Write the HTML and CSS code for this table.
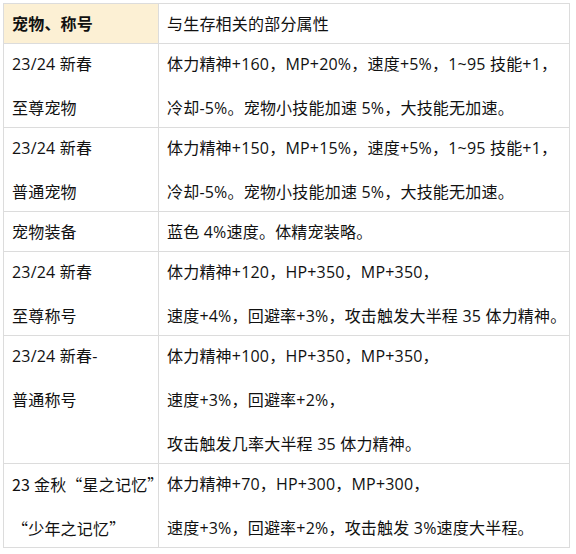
FILE: index.html
```html
<!DOCTYPE html>
<html lang="zh-CN">
<head>
<meta charset="utf-8">
<link rel="stylesheet" href="styles.css">
</head>
<body>
<div class="wrap">
<table class="attr-table">
  <colgroup><col class="c1"><col class="c2"></colgroup>
  <tr class="head">
    <th class="h-pet"><p>宠物、称号</p></th>
    <td><p>与生存相关的部分属性</p></td>
  </tr>
  <tr>
    <td><p>23/24 新春</p><p>至尊宠物</p></td>
    <td><p>体力精神+160，MP+20%，速度+5%，1~95 技能+1，</p><p>冷却-5%。宠物小技能加速 5%，大技能无加速。</p></td>
  </tr>
  <tr>
    <td><p>23/24 新春</p><p>普通宠物</p></td>
    <td><p>体力精神+150，MP+15%，速度+5%，1~95 技能+1，</p><p>冷却-5%。宠物小技能加速 5%，大技能无加速。</p></td>
  </tr>
  <tr>
    <td><p>宠物装备</p></td>
    <td><p>蓝色 4%速度。体精宠装略。</p></td>
  </tr>
  <tr>
    <td><p>23/24 新春</p><p>至尊称号</p></td>
    <td><p>体力精神+120，HP+350，MP+350，</p><p>速度+4%，回避率+3%，攻击触发大半程 35 体力精神。</p></td>
  </tr>
  <tr>
    <td><p>23/24 新春-</p><p>普通称号</p></td>
    <td><p>体力精神+100，HP+350，MP+350，</p><p>速度+3%，回避率+2%，</p><p>攻击触发几率大半程 35 体力精神。</p></td>
  </tr>
  <tr>
    <td class="cjk"><p>23 金秋“星之记忆”</p><p>“少年之记忆”</p></td>
    <td><p>体力精神+70，HP+300，MP+300，</p><p>速度+3%，回避率+2%，攻击触发 3%速度大半程。</p></td>
  </tr>
</table>
</div>
</body>
</html>
```

FILE: styles.css
```css
html, body {
  margin: 0;
  padding: 0;
  background: #ffffff;
}
.wrap {
  padding: 3px 0 0 3px;
}
.attr-table {
  border-collapse: collapse;
  width: 566px;
  table-layout: fixed;
  font-family: "Open Sans", "Noto Sans CJK SC", sans-serif;
  font-size: 16px;
  letter-spacing: 0.2px;
  color: #111111;
}
.c1 { width: 155px; }
.c2 { width: 411px; }
.attr-table th,
.attr-table td {
  border: 1px solid #dcdcdc;
  padding: 8px 8px 7px 8px;
  text-align: left;
  vertical-align: top;
  font-weight: normal;
}
.attr-table p {
  margin: 0;
  line-height: 24px;
  white-space: nowrap;
}
.attr-table p + p {
  margin-top: 20px;
}
.attr-table .cjk {
  font-family: "Noto Sans CJK SC", sans-serif;
}
.attr-table .h-pet {
  background: #fcf0d4;
  font-weight: bold;
}
```
